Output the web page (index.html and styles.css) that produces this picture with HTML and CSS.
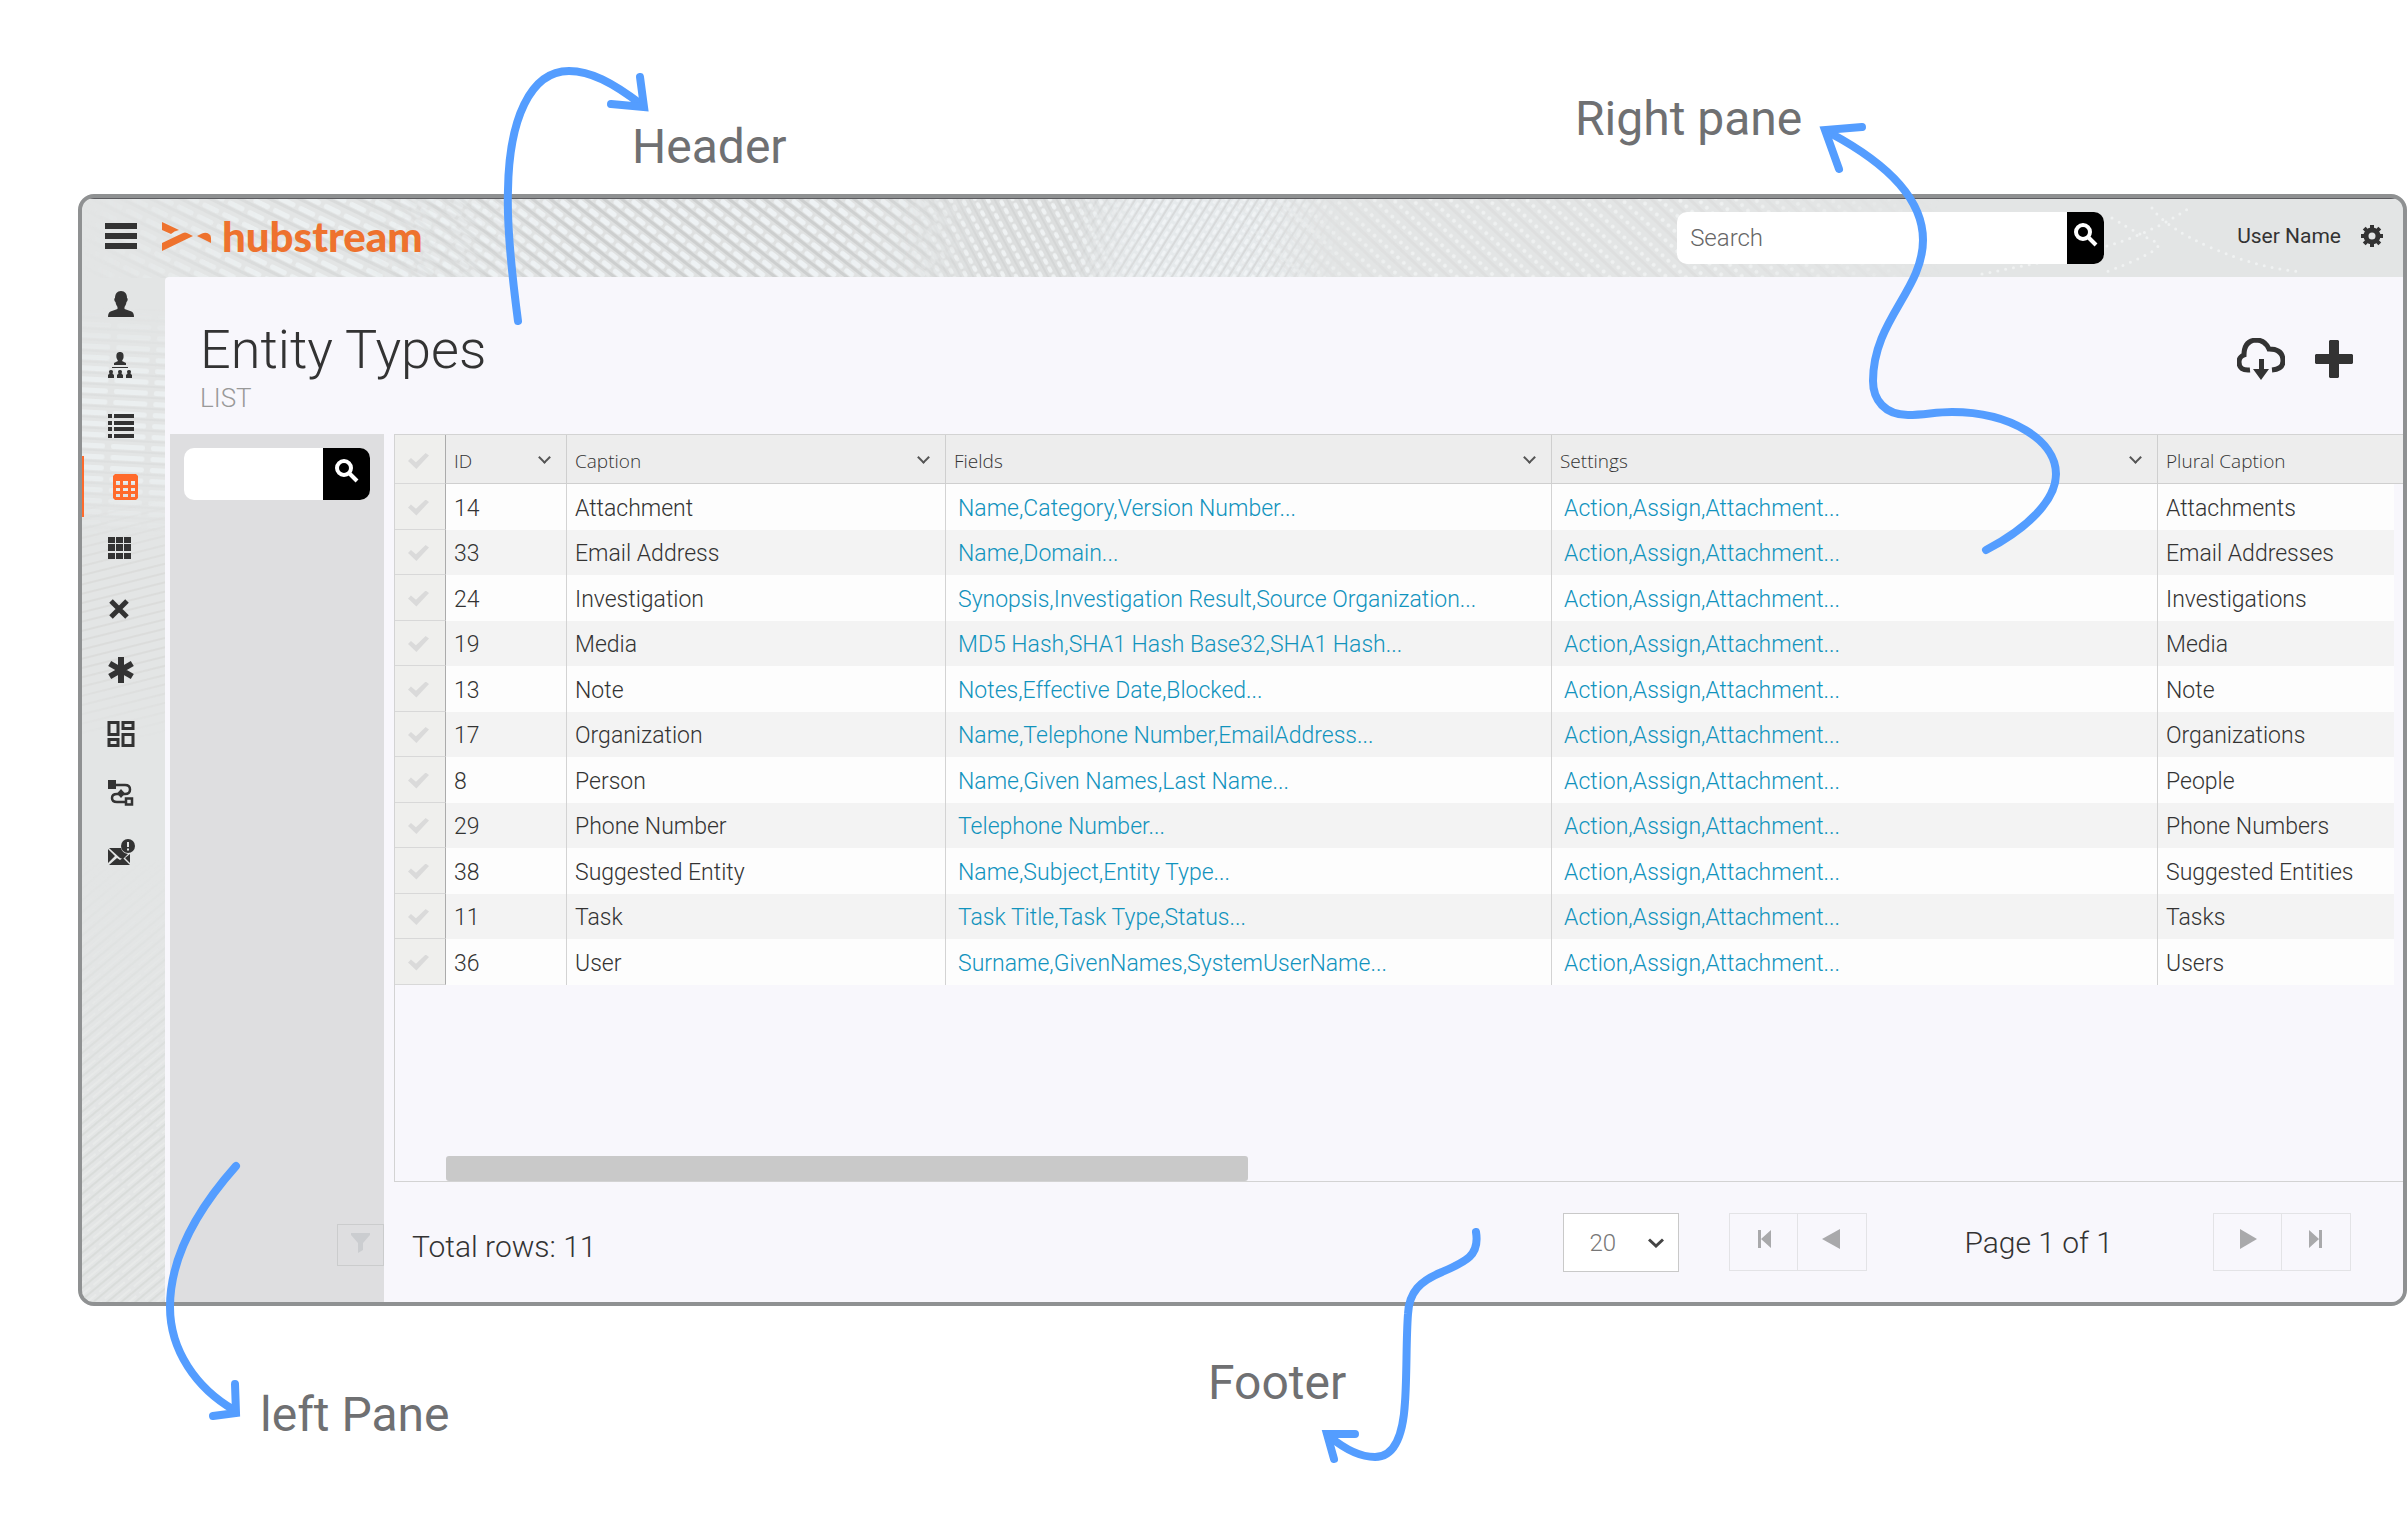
FILE: index.html
```html
<!DOCTYPE html>
<html lang="en">

<head>
	<meta charset="UTF-8">
	<meta name="viewport" content="width=device-width, initial-scale=1.0">
	<title>Hubstream - Entity Types</title>
	<link rel="stylesheet" href="styles.css">
</head>

<body>

	<div class="app">
		<svg class="texture" aria-hidden="true">
			<defs>
				<!-- stripe and dot patterns for the woven background -->
				<pattern id="weave" width="14" height="11" patternUnits="userSpaceOnUse" patternTransform="rotate(38)">
					<rect width="14" height="11" fill="#dfe1e1" />
					<rect y="8" width="14" height="3" fill="#cdcfcf" />
					<rect x="1" y="2" width="11" height="5" rx="2" fill="#eef2f4" />
				</pattern>
				<pattern id="ripple" width="22" height="13" patternUnits="userSpaceOnUse" patternTransform="rotate(26)">
					<rect y="8" width="22" height="3" fill="#d9dbdb" />
					<rect x="1" y="2" width="18" height="5" rx="2" fill="#ecf0f1" />
				</pattern>
				<pattern id="beads" width="9" height="11" patternUnits="userSpaceOnUse" patternTransform="rotate(62)">
					<rect width="9" height="11" fill="#dcdede" />
					<rect y="8" width="9" height="2" fill="#d4d6d6" />
					<rect x="1" y="2" width="7" height="4" rx="2" fill="#eff2f3" />
				</pattern>
				<pattern id="lean" width="9" height="8" patternUnits="userSpaceOnUse" patternTransform="rotate(-58)">
					<rect width="9" height="8" fill="#e6eaec" />
					<rect y="5" width="9" height="2" fill="#d8dadb" />
					<rect x="1" y="1" width="6" height="3" rx="1" fill="#f0f3f5" />
				</pattern>
				<pattern id="dots" width="8" height="13" patternUnits="userSpaceOnUse" patternTransform="rotate(43)">
					<rect y="8" width="8" height="3" fill="#dedfdf" />
					<circle cx="3" cy="4" r="2" fill="#eff1f1" />
				</pattern>
				<pattern id="waves" width="40" height="11" patternUnits="userSpaceOnUse" patternTransform="rotate(3)">
					<rect x="2" y="2" width="34" height="5" rx="2" fill="#ebeff0" />
					<rect y="8" width="40" height="2" fill="#dddfdf" />
				</pattern>
				<pattern id="grain" width="40" height="9" patternUnits="userSpaceOnUse" patternTransform="rotate(-14)">
					<rect y="5" width="40" height="2" fill="#dbdcdb" />
				</pattern>
				<pattern id="slope" width="30" height="9" patternUnits="userSpaceOnUse" patternTransform="rotate(-40)">
					<rect y="6" width="30" height="2" fill="#d9dcda" />
					<rect y="2" width="26" height="2" fill="#e8eae9" />
				</pattern>
				<linearGradient id="fade">
					<stop offset="0" stop-color="#fff" stop-opacity="0" />
					<stop offset="0.3" stop-color="#fff" />
					<stop offset="0.7" stop-color="#fff" />
					<stop offset="1" stop-color="#fff" stop-opacity="0" />
				</linearGradient>
				<linearGradient id="fade-down" x2="0" y2="1">
					<stop offset="0" stop-color="#fff" stop-opacity="0" />
					<stop offset="0.3" stop-color="#fff" />
					<stop offset="0.7" stop-color="#fff" />
					<stop offset="1" stop-color="#fff" stop-opacity="0" />
				</linearGradient>
				<linearGradient id="fade-in" x2="0" y2="1">
					<stop offset="0" stop-color="#fff" stop-opacity="0" />
					<stop offset="0.6" stop-color="#fff" />
				</linearGradient>
				<mask id="m-ripple"><rect x="0" width="620" height="80" fill="url(#fade)" /></mask>
				<mask id="m-weave"><rect x="280" width="680" height="80" fill="url(#fade)" /></mask>
				<mask id="m-beads"><rect x="820" width="260" height="80" fill="url(#fade)" /></mask>
				<mask id="m-lean"><rect x="980" width="280" height="80" fill="url(#fade)" /></mask>
				<mask id="m-dots"><rect x="1100" width="760" height="80" fill="url(#fade)" /></mask>
				<mask id="m-waves"><rect y="110" width="90" height="230" fill="url(#fade-down)" /></mask>
				<mask id="m-grain"><rect y="300" width="90" height="240" fill="url(#fade-down)" /></mask>
				<mask id="m-slope"><rect y="660" width="90" height="460" fill="url(#fade-in)" /></mask>
			</defs>
			<g mask="url(#m-ripple)"><rect width="640" height="80" fill="url(#ripple)" /></g>
			<g mask="url(#m-weave)"><rect x="280" width="700" height="80" fill="url(#weave)" /></g>
			<g mask="url(#m-beads)"><rect x="800" width="300" height="80" fill="url(#beads)" /></g>
			<g mask="url(#m-lean)"><rect x="960" width="320" height="80" fill="url(#lean)" /></g>
			<g mask="url(#m-dots)"><rect x="1080" width="800" height="80" fill="url(#dots)" /></g>
			<g mask="url(#m-waves)"><rect y="80" width="90" height="280" fill="url(#waves)" /></g>
			<g mask="url(#m-grain)"><rect y="280" width="90" height="280" fill="url(#grain)" /></g>
			<g mask="url(#m-slope)"><rect y="660" width="90" height="460" fill="url(#slope)" /></g>
			<g fill="none" stroke="#f0f2f2" stroke-width="3" stroke-linecap="round" stroke-dasharray="0 8">
				<path d="M1900 76C1980 60 2050 50 2110 8" />
				<path d="M2030 20q30 18 44 24t-50 30" />
				<path d="M2070 10q14 20 60 40t90 24" />
			</g>
		</svg>

		<header class="topbar">
			<button class="icon-btn menu-btn" aria-label="Menu">
				<svg width="32" height="26" viewBox="0 0 32 26"><path d="M0 0h32v6H0zM0 10h32v6H0zM0 20h32v6H0z" /></svg>
			</button>
			<a class="logo" href="#">
				<svg width="49" height="29" viewBox="0 0 49 29" aria-hidden="true">
					<path d="M0 0l17 8q-5 1-8 4l-9-4zM0 21l21-10q2-1 4 0l6 3L0 29zM35 14l5-2.500q4-1.500 7 .500 2 1 2 4v5z" />
				</svg>
				<span>hubstream</span>
			</a>
			<form class="search search-main">
				<input type="text" placeholder="Search" aria-label="Search">
				<button type="button" aria-label="Run search">
					<svg width="24" height="24" viewBox="0 0 24 24"><circle cx="9" cy="9" r="7" /><path d="M14 14l8 8" /></svg>
				</button>
			</form>
			<span class="user">User Name</span>
			<button class="icon-btn settings-btn" aria-label="Settings">
				<svg width="22" height="22" viewBox="0 0 22 22">
					<circle cx="11" cy="11" r="6" fill="none" stroke="#333" stroke-width="5" />
					<path d="M11 0v4M11 18v4M0 11h4M18 11h4M3.200 3.200l3 3M15.800 15.800l3 3M3.200 18.800l3-3M15.800 6.200l3-3" stroke="#333" stroke-width="4" />
				</svg>
			</button>
		</header>

		<div class="body">
			<nav class="sidebar" aria-label="Main">
				<ul>
					<li><a href="#" aria-label="Users"><svg width="26" height="26" viewBox="0 0 26 26"><path d="M13 0c4 0 6 3 6 7 1 0 1 3-.500 4-.500 3-1.500 4-2 5v2l7 2.500q2.500 1 2.500 5.500H0q0-4.500 2.500-5.500l7-2.500v-2c-.500-1-1.500-2-2-5C6 10 6 7 7 7c0-4 2-7 6-7z" /></svg></a></li>
					<li><a href="#" aria-label="Groups"><svg width="26" height="26" viewBox="0 0 26 26"><path d="M12 0c3 0 4 2 3.500 6L14 9l4 2v2H6v-2l4-2-1.500-3C8 2 9 0 12 0zM4 15h16v1H4zM0 26v-3l1.500-1.500Q0 18 3 18t1.500 3.500L6 23v3zM9 26v-3l1.500-1.500Q9 18 12 18t1.500 3.500L15 23v3zM18 26v-3l1.500-1.500Q18 18 21 18t1.500 3.500L24 23v3z" /></svg></a></li>
					<li><a href="#" aria-label="Lists"><svg width="26" height="24" viewBox="0 0 26 24"><path d="M0 0h4v4H0zM6 0h20v4H6zM0 7h4v4H0zM6 7h20v4H6zM0 13h4v4H0zM6 13h20v4H6zM0 20h4v4H0zM6 20h20v4H6z" /></svg></a></li>
					<li class="active"><a href="#" aria-label="Entity types"><svg width="25" height="26" viewBox="0 0 25 26"><path fill-rule="evenodd" d="M2 0h21l2 2v22l-2 2H2l-2-2V2zM3 7v4h4V7zM10 7v4h5V7zM18 7v4h4V7zM3 14v3h4v-3zM10 14v3h5v-3zM18 14v3h4v-3zM3 20v3h4v-3zM10 20v3h5v-3zM18 20v3h4v-3z" /></svg></a></li>
					<li><a href="#" aria-label="Grid"><svg width="26" height="22" viewBox="0 0 26 22"><path d="M0 0h7v6H0zM8 0h7v6H8zM16 0h7v6h-7zM0 7h7v7H0zM8 7h7v7H8zM16 7h7v7h-7zM0 16h7v6H0zM8 16h7v6H8zM16 16h7v6h-7z" /></svg></a></li>
					<li><a href="#" aria-label="Remove"><svg width="26" height="20" viewBox="0 0 26 20"><path d="M3 2l16 16M19 2L3 18" stroke="#333" stroke-width="5" /></svg></a></li>
					<li><a href="#" aria-label="Required"><svg width="26" height="26" viewBox="0 0 26 26"><path d="M13 0v26M1.700 6.500l22.600 13M24.300 6.500l-22.600 13" stroke="#333" stroke-width="6" /></svg></a></li>
				</ul>
				<ul class="tools">
					<li><a href="#" aria-label="Dashboards"><svg width="28" height="26" viewBox="0 0 28 26"><path d="M2 1.500h9v12H2zM16 1.500h10v6H16zM2 18.500h9v6H2zM16 13.500h10v11H16z" fill="none" stroke="#333" stroke-width="3" /></svg></a></li>
					<li><a href="#" aria-label="Workflows"><svg width="28" height="26" viewBox="0 0 28 26"><path d="M1 0h8v9H1z" /><path d="M9 5h9q5 0 5 4.500T18 14H10q-5 0-5 4t5 4h9M19 18.500h6v6h-6z" fill="none" stroke="#333" stroke-width="2.500" /><path d="M14 9l4 4.500-4 4.500-4-4.500z" /></svg></a></li>
					<li><a href="#" aria-label="Messages"><svg width="28" height="26" viewBox="0 0 28 26"><path d="M2 9h12q1 5 7 6l-5 5-3-1zM1 10l7 7-7 7zM23 15v9l-5-5zM2 26l8-7 3 2 3-2 7 7z" /><circle cx="21" cy="7" r="7" /><path d="M21 3v5M21 9.500v2" stroke="#e3e5e5" stroke-width="2" /></svg></a></li>
				</ul>
			</nav>

			<main class="content">
				<div class="page-head">
					<div>
						<h1>Entity Types</h1>
						<p class="subtitle">LIST</p>
					</div>
					<div class="page-actions">
						<button class="icon-btn" aria-label="Download">
							<svg width="48" height="42" viewBox="0 0 48 42"><path d="M13 32q-11 1-11-8 0-5 5-7 0-14 12-15 9 0 13 9 14 0 14 12 0 8-11 9" fill="none" stroke="#333" stroke-width="5" /><path d="M22 21h5v10h5l-8 11-8-11h6z" /></svg>
						</button>
						<button class="icon-btn" aria-label="Add">
							<svg width="38" height="38" viewBox="0 0 38 38"><path d="M15 0h8l1 1v13h13l1 1v8l-1 1H24v13l-1 1h-8l-1-1V24H1l-1-1v-8l1-1h13V1z" /></svg>
						</button>
					</div>
				</div>

				<div class="panes">
					<aside class="left-pane">
						<form class="search">
							<input type="text" aria-label="Filter list">
							<button type="button" aria-label="Search list">
								<svg width="24" height="24" viewBox="0 0 24 24"><circle cx="9" cy="9" r="7" /><path d="M14 14l8 8" /></svg>
							</button>
						</form>
						<button class="filter-btn" aria-label="Filter">
							<svg width="19" height="20" viewBox="0 0 19 20"><path d="M0 0h19v2l-7 8v7l-5 3V10L0 2z" /></svg>
						</button>
					</aside>

					<section class="right-pane">
						<div class="grid">
							<table>
								<colgroup>
									<col class="col-check">
									<col class="col-id">
									<col class="col-caption">
									<col class="col-wide">
									<col class="col-wide">
									<col>
								</colgroup>
								<thead>
									<tr>
										<th><input type="checkbox" aria-label="Select all"></th>
										<th><div>ID <button aria-label="ID menu"></button></div></th>
										<th><div>Caption <button aria-label="Caption menu"></button></div></th>
										<th><div>Fields <button aria-label="Fields menu"></button></div></th>
										<th><div>Settings <button aria-label="Settings menu"></button></div></th>
										<th><div>Plural Caption</div></th>
									</tr>
								</thead>
								<tbody>
									<tr><td><input type="checkbox" aria-label="Select 14"></td><td>14</td><td>Attachment</td><td><a href="#">Name,Category,Version Number...</a></td><td><a href="#">Action,Assign,Attachment...</a></td><td>Attachments</td></tr>
									<tr><td><input type="checkbox" aria-label="Select 33"></td><td>33</td><td>Email Address</td><td><a href="#">Name,Domain...</a></td><td><a href="#">Action,Assign,Attachment...</a></td><td>Email Addresses</td></tr>
									<tr><td><input type="checkbox" aria-label="Select 24"></td><td>24</td><td>Investigation</td><td><a href="#">Synopsis,Investigation Result,Source Organization...</a></td><td><a href="#">Action,Assign,Attachment...</a></td><td>Investigations</td></tr>
									<tr><td><input type="checkbox" aria-label="Select 19"></td><td>19</td><td>Media</td><td><a href="#">MD5 Hash,SHA1 Hash Base32,SHA1 Hash...</a></td><td><a href="#">Action,Assign,Attachment...</a></td><td>Media</td></tr>
									<tr><td><input type="checkbox" aria-label="Select 13"></td><td>13</td><td>Note</td><td><a href="#">Notes,Effective Date,Blocked...</a></td><td><a href="#">Action,Assign,Attachment...</a></td><td>Note</td></tr>
									<tr><td><input type="checkbox" aria-label="Select 17"></td><td>17</td><td>Organization</td><td><a href="#">Name,Telephone Number,EmailAddress...</a></td><td><a href="#">Action,Assign,Attachment...</a></td><td>Organizations</td></tr>
									<tr><td><input type="checkbox" aria-label="Select 8"></td><td>8</td><td>Person</td><td><a href="#">Name,Given Names,Last Name...</a></td><td><a href="#">Action,Assign,Attachment...</a></td><td>People</td></tr>
									<tr><td><input type="checkbox" aria-label="Select 29"></td><td>29</td><td>Phone Number</td><td><a href="#">Telephone Number...</a></td><td><a href="#">Action,Assign,Attachment...</a></td><td>Phone Numbers</td></tr>
									<tr><td><input type="checkbox" aria-label="Select 38"></td><td>38</td><td>Suggested Entity</td><td><a href="#">Name,Subject,Entity Type...</a></td><td><a href="#">Action,Assign,Attachment...</a></td><td>Suggested Entities</td></tr>
									<tr><td><input type="checkbox" aria-label="Select 11"></td><td>11</td><td>Task</td><td><a href="#">Task Title,Task Type,Status...</a></td><td><a href="#">Action,Assign,Attachment...</a></td><td>Tasks</td></tr>
									<tr><td><input type="checkbox" aria-label="Select 36"></td><td>36</td><td>User</td><td><a href="#">Surname,GivenNames,SystemUserName...</a></td><td><a href="#">Action,Assign,Attachment...</a></td><td>Users</td></tr>
								</tbody>
							</table>
							<div class="scroll-track"><div class="scroll-thumb"></div></div>
						</div>

						<footer class="pager">
							<span class="total">Total rows: 11</span>
							<div class="page-size">
								<select aria-label="Rows per page">
									<option>20</option>
								</select>
								<svg width="16" height="10" viewBox="0 0 16 10" aria-hidden="true"><path d="M1 1.500l7 6.500 7-6.500" /></svg>
							</div>
							<div class="btn-pair">
								<button aria-label="First page"><svg width="20" height="20" viewBox="0 0 20 20"><path d="M4 1h3v18H4zM17 1v18L7 10z" /></svg></button>
								<button aria-label="Previous page"><svg width="20" height="20" viewBox="0 0 20 20"><path d="M18 0v20L0 10z" /></svg></button>
							</div>
							<span class="page-no">Page 1 of 1</span>
							<div class="btn-pair">
								<button aria-label="Next page"><svg width="20" height="20" viewBox="0 0 20 20"><path d="M2 0v20l17-10z" /></svg></button>
								<button aria-label="Last page"><svg width="20" height="20" viewBox="0 0 20 20"><path d="M13 1h3v18h-3zM3 1v18l10-9z" /></svg></button>
							</div>
						</footer>
					</section>
				</div>
			</main>
		</div>
	</div>

	<!-- callouts drawn over the app -->
	<svg class="arrows" width="2408" height="1520" viewBox="0 0 2408 1520" aria-hidden="true">
		<path d="M518 321C510 260 507 215 508 190C509 120 530 71 569 71C590 71 612 82 642 105" />
		<path d="M640 77l4 30-33-3" />
		<path d="M1986 550C2028 528 2056 500 2056 474C2056 440 2010 412 1952 412C1935 412 1925 415 1908 415C1885 415 1873 400 1873 381C1873 320 1923 290 1923 240C1923 200 1890 165 1830 133" />
		<path d="M1862 127l-37 3 14 39" />
		<path d="M1476 1232C1480 1256 1465 1262 1442 1272C1420 1281 1409 1292 1408 1314C1406 1340 1407 1375 1405 1402C1403 1438 1394 1457 1375 1457C1362 1457 1346 1450 1330 1437" />
		<path d="M1355 1434h-28l7 25" />
		<path d="M236 1166C195 1212 170 1260 170 1307C170 1350 196 1388 234 1410" />
		<path d="M235 1384l1 29-23 3" />
	</svg>
	<span class="callout callout-header">Header</span>
	<span class="callout callout-right">Right pane</span>
	<span class="callout callout-left">left Pane</span>
	<span class="callout callout-footer">Footer</span>

</body>

</html>
```
FILE: styles.css
```css
* {
	box-sizing: border-box;
}

body {
	position: relative;
	margin: 0;
	min-height: 100vh;
	padding: 194px 1px 214px 78px;
	background: #fff;
	color: #333;
	font-family: Roboto, "Liberation Sans", sans-serif;
	font-weight: 300;
	font-size: 24px;
}

button,
input,
select {
	font: inherit;
	color: inherit;
	margin: 0;
	padding: 0;
	border: none;
	background: none;
}

button,
input,
select,
a {
	outline: none;
}

svg {
	display: block;
	fill: #333;
}

.icon-btn {
	cursor: pointer;
}

/* App frame */
.app {
	position: relative;
	display: flex;
	flex-direction: column;
	min-height: calc(100vh - 408px);
	border: 4px solid #8f9192;
	border-radius: 16px;
	background: #e3e5e5;
	overflow: hidden;
}

.texture {
	position: absolute;
	top: 0;
	left: 0;
	width: 100%;
	height: 100%;
}

.topbar {
	position: relative;
	display: flex;
	align-items: center;
	height: 79px;
	padding: 0 20px 4px 23px;
	border-top: 1px solid #5c5c60;
}

.logo {
	display: flex;
	align-items: center;
	gap: 11px;
	margin-left: 25px;
	color: #ee722e;
	font-family: Lato, sans-serif;
	font-weight: 900;
	font-size: 42px;
	line-height: 40px;
	text-decoration: none;
}

.logo svg {
	fill: #ee722e;
}

.search {
	display: flex;
	height: 52px;
	border-radius: 10px;
	background: #fff;
	overflow: hidden;
}

.search input {
	flex: 1;
	min-width: 0;
	padding: 0 13px;
}

.search input::placeholder {
	color: #666;
	opacity: 1;
}

.search button {
	display: flex;
	justify-content: center;
	width: 47px;
	padding-top: 11px;
	background: #000;
}

.search svg {
	fill: none;
	stroke: #fff;
	stroke-width: 4px;
}

.search-main {
	width: 427px;
	margin: 4px 0 0 auto;
}

.search-main button {
	width: 37px;
}

.user {
	margin-left: 133px;
	font-size: 21px;
	font-weight: 400;
}

.settings-btn {
	margin-left: 20px;
}

.settings-btn svg {
	fill: none;
}

.body {
	position: relative;
	display: flex;
	flex: 1;
}

/* Sidebar */
.sidebar {
	width: 83px;
	margin-top: -4px;
}

.sidebar ul {
	list-style: none;
	margin: 0;
	padding: 0;
}

.sidebar a {
	display: flex;
	align-items: center;
	justify-content: center;
	height: 61px;
	padding-right: 5px;
}

.sidebar .active a {
	padding-left: 1px;
	padding-right: 0;
	border-left: 2px solid #ff6a2b;
}

.sidebar .active svg {
	fill: #ff6a2b;
}

.sidebar .tools {
	margin-top: 4px;
}

.sidebar .tools a {
	height: 59px;
}

.content {
	flex: 1;
	display: flex;
	flex-direction: column;
	min-width: 0;
	background: #f8f7fc;
	border-top-left-radius: 4px;
}

.page-head {
	display: flex;
	justify-content: space-between;
	height: 157px;
	padding: 40px 50px 0 35px;
}

h1 {
	margin: 0;
	font-size: 54px;
	line-height: 66px;
	font-weight: 300;
}

.subtitle {
	margin: 0;
	color: #999;
	font-size: 26px;
	line-height: 30px;
}

.page-actions {
	display: flex;
	align-items: center;
	gap: 30px;
	height: 84px;
}

.panes {
	flex: 1;
	display: flex;
	gap: 10px;
	padding-left: 5px;
}

.left-pane {
	display: flex;
	flex-direction: column;
	width: 214px;
	padding: 14px 0 36px;
	background: #dedee0;
}

.left-pane .search {
	margin: 0 14px;
}

.filter-btn {
	display: flex;
	justify-content: center;
	align-self: flex-end;
	width: 47px;
	height: 42px;
	margin-top: auto;
	padding-top: 8px;
	border: 1px solid #cbcccd;
}

.filter-btn svg {
	fill: #cbcdd0;
}

.right-pane {
	flex: 1;
	display: flex;
	flex-direction: column;
	min-width: 0;
}

/* Data grid */
.grid {
	flex: 1;
	display: flex;
	flex-direction: column;
	border: 1px solid #d3d3d3;
	border-right: none;
}

table {
	width: 100%;
	table-layout: fixed;
	border-collapse: separate;
	border-spacing: 0;
	font-size: 23px;
}

.col-check {
	width: 51px;
}

.col-id {
	width: 121px;
}

.col-caption {
	width: 379px;
}

.col-wide {
	width: 606px;
}

th {
	height: 49px;
	padding: 4px 16px 0 8px;
	background: #ededed;
	border-right: 1px solid #cfcfcf;
	border-bottom: 1px solid #cfcfcf;
	font-family: "Open Sans", "Noto Sans", sans-serif;
	font-size: 19px;
	font-weight: 300;
	text-align: left;
}

th div {
	display: flex;
	align-items: center;
	justify-content: space-between;
}

th button {
	width: 9px;
	height: 9px;
	margin-top: -8px;
	margin-right: 1px;
	border: solid #555;
	border-width: 0 2px 2px 0;
	transform: rotate(45deg);
}

td {
	height: 46px;
	padding: 2px 8px 0;
	background: #fdfdfd;
	border-right: 1px solid #d3d3d3;
	white-space: nowrap;
}

tr:nth-child(even) td {
	height: 45px;
	background: #f3f3f3;
}

th:first-child,
tr td:first-child,
tr:nth-child(even) td:first-child {
	padding-left: 13px;
	padding-right: 0;
	background: #efefed;
	border-right-color: #ababab;
	border-bottom: 1px solid #d8d8d8;
}

th:last-child {
	border-right: none;
}

td:last-child {
	border-right: 9px solid transparent;
	background-clip: padding-box !important;
}

td:nth-child(4),
td:nth-child(5) {
	padding-left: 12px;
}

td a {
	color: #1193bd;
	text-decoration: none;
}

td input,
th input {
	display: block;
	appearance: none;
	width: 21px;
	height: 16px;
	background: #dadada;
	clip-path: polygon(0 50%, 14% 32%, 38% 58%, 84% 0, 100% 16%, 40% 100%);
}

.scroll-track {
	margin-top: auto;
	padding-left: 51px;
}

.scroll-thumb {
	width: 41%;
	height: 25px;
	border-radius: 3px;
	background: #c9c9c9;
}

/* Footer */
.pager {
	display: flex;
	align-items: flex-start;
	height: 120px;
	padding: 31px 52px 0 18px;
}

.total,
.page-no {
	font-size: 30px;
	line-height: 60px;
}

.total {
	margin-top: 4px;
}

.page-size {
	position: relative;
	margin-left: auto;
}

.page-size select {
	appearance: none;
	width: 116px;
	height: 59px;
	padding-left: 25px;
	border: 1px solid #c9c9c9;
	background: #fff;
	color: #777;
}

.page-size svg {
	position: absolute;
	top: 25px;
	right: 15px;
	fill: none;
	stroke: #444;
	stroke-width: 3px;
	pointer-events: none;
}

.btn-pair {
	display: flex;
	margin-left: 50px;
}

.btn-pair button {
	display: flex;
	justify-content: center;
	width: 69px;
	height: 58px;
	padding-top: 15px;
	border: 1px solid #e3e3e6;
}

.btn-pair button + button {
	border-left: none;
}

.btn-pair svg {
	fill: #a9a9ab;
}

.page-no {
	margin: 0 50px 0 97px;
}

/* Callouts */
.arrows {
	position: absolute;
	top: 0;
	left: 0;
	fill: none;
	stroke: #549dff;
	stroke-width: 8px;
	stroke-linecap: round;
	pointer-events: none;
}

.callout {
	position: absolute;
	color: #6f7072;
	font-size: 48px;
	line-height: 60px;
	font-weight: 400;
}

.callout-header {
	top: 117px;
	left: 632px;
}

.callout-right {
	top: 89px;
	left: 1575px;
}

.callout-left {
	top: 1385px;
	left: 260px;
}

.callout-footer {
	top: 1353px;
	left: 1208px;
}
```
